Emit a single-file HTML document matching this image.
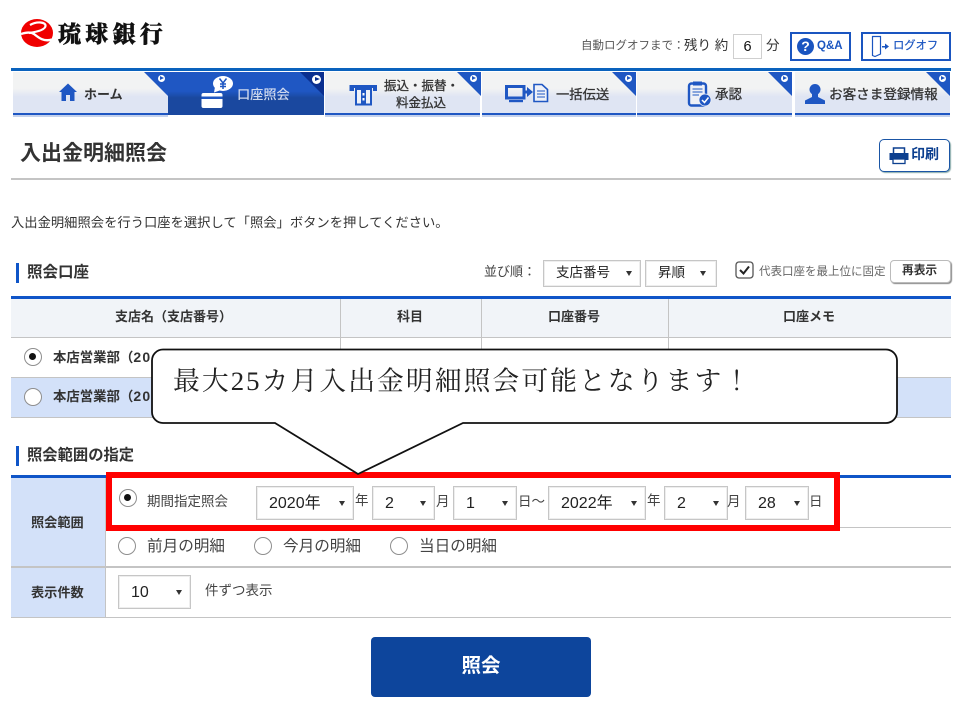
<!DOCTYPE html>
<html lang="ja"><head><meta charset="utf-8"><title>入出金明細照会</title>
<style>
html,body{margin:0;padding:0;background:#fff}
#p{position:relative;width:960px;height:704px;overflow:hidden;background:#fff;font-family:"Liberation Sans","Noto Sans CJK JP",sans-serif;color:#333}
#p div,#p span.a,#p svg{position:absolute}
.t{position:absolute;white-space:nowrap;line-height:20px;height:20px}
.b{font-weight:700}
.tab{top:72px;height:41px;background:linear-gradient(#f2f3f3 0,#f2f3f3 40%,#dfe5f3 60%,#dfe5f3 100%);border-bottom:2px solid #1f57c3;box-shadow:0 2px 0 #c5d2ec}
.tri{top:72px;width:0;height:0;border-top:24px solid #1f57c3;border-left:24px solid transparent}
.dot{top:75px;width:7px;height:7px;border-radius:50%;background:#fff}
.dot:after{content:"";position:absolute;left:2px;top:1px;border-left:4px solid #1f57c3;border-top:2.5px solid transparent;border-bottom:2.5px solid transparent}
.sel{box-sizing:border-box;height:34px;border:1px solid #c6c6c6;background:#fff;font-size:16px;line-height:32px;color:#222;box-shadow:inset 0 0 0 1px #eee}
.sel span{position:absolute;left:12px;top:1px;white-space:nowrap}
.sel i{position:absolute;right:5px;top:14px;width:0;height:0;border-top:5px solid #333;border-left:3px solid transparent;border-right:3px solid transparent}
.r{box-sizing:border-box;width:18px;height:18px;border-radius:50%;border:1.5px solid #8e8e8e;background:#fff}
.r.on:after{content:"";position:absolute;left:4px;top:4px;width:7px;height:7px;border-radius:50%;background:#111}
.g{background:#c4c4c4}
.bar{left:16px;width:3px;height:20px;background:#0f55c8}
.n{-webkit-text-stroke:.3px #333;color:#333}
.d{letter-spacing:1.300px;font-size:14px}
</style></head><body><div id="p">

<!-- logo -->
<svg style="left:20px;top:18px" width="34" height="30" viewBox="0 0 34 30"><ellipse cx="17" cy="15" rx="16" ry="14" fill="#f00000"/><path d="M10 7 C17 3 26 4 25.500 8 C25 12 16 14 9 15" fill="none" stroke="#fff" stroke-width="2.200"/><path d="M1 16 C7 14 11 14 14 16 C19 20 24 24 32 21.500" fill="none" stroke="#fff" stroke-width="2.400"/></svg>
<span class="t b" style="left:58px;top:21px;font-size:23px;line-height:24px;height:24px;letter-spacing:4.300px;color:#111;font-family:'Noto Serif CJK SC','Liberation Serif',serif;font-weight:900;-webkit-text-stroke:.5px #111">琉球銀行</span>

<!-- header right -->
<span class="t" style="left:581px;top:36px;font-size:11.500px;color:#555">自動ログオフまで：</span>
<span class="t" style="left:684px;top:36px;font-size:13.500px;color:#333">残り 約</span>
<div style="left:733px;top:34px;width:29px;height:25px;box-sizing:border-box;border:1px solid #cfcfcf"></div>
<span class="t" style="left:733px;top:37px;width:29px;text-align:center;font-size:14.500px;color:#111">6</span>
<span class="t" style="left:766px;top:36px;font-size:13.500px;color:#333">分</span>
<div style="left:790px;top:32px;width:61px;height:29px;box-sizing:border-box;border:2px solid #1a55c0;background:#fff"></div>
<div style="left:797px;top:38px;width:17px;height:17px;border-radius:50%;background:#1a55c0;color:#fff;font-size:14px;font-weight:700;line-height:17px;text-align:center">?</div>
<span class="t b" style="left:817px;top:36px;font-size:11.500px;color:#1a55c0">Q&amp;A</span>
<div style="left:861px;top:32px;width:90px;height:29px;box-sizing:border-box;border:2px solid #1a55c0;background:#fff"></div>
<svg style="left:871px;top:35px" width="20" height="23" viewBox="0 0 20 23"><path d="M1.500 1.500H9.500V19L4 21.500L1.500 20.500Z" fill="none" stroke="#1a55c0" stroke-width="1.200"/><path d="M11 11H14V8.500L18 11.500L14 14.500V12.500H11Z" fill="#1a55c0"/></svg>
<span class="t" style="left:893px;top:36px;font-size:11.300px;color:#1a55c0;-webkit-text-stroke:.2px #1a55c0">ログオフ</span>

<!-- nav -->
<div style="left:11px;top:68px;width:940px;height:3px;background:#0a62bd"></div>
<div class="tab" style="left:13px;width:155px"></div>
<div style="left:168px;top:72px;width:156px;height:43px;background:linear-gradient(#1f57c3 0,#1f57c3 45%,#1a489f 60%,#1a489f 100%)"></div>
<div class="tab" style="left:325px;width:155px"></div>
<div class="tab" style="left:482px;width:154px"></div>
<div class="tab" style="left:637px;width:155px"></div>
<div class="tab" style="left:795px;width:155px"></div>
<div class="tri" style="left:144px"></div><div class="dot" style="left:158px"></div>
<div class="tri" style="left:300px;border-top-color:#0a2f8f"></div><div style="left:312px;top:75px;width:9px;height:9px;border-radius:50%;background:#fff"></div><div style="left:315px;top:77px;border-left:5px solid #0a2f8f;border-top:2.500px solid transparent;border-bottom:2.500px solid transparent"></div>
<div class="tri" style="left:457px"></div><div class="dot" style="left:470px"></div>
<div class="tri" style="left:612px"></div><div class="dot" style="left:625px"></div>
<div class="tri" style="left:768px"></div><div class="dot" style="left:781px"></div>
<div class="tri" style="left:926px"></div><div class="dot" style="left:939px"></div>

<svg style="left:59px;top:83px" width="18" height="18" viewBox="0 0 18 18"><path d="M9 0.500L18 9H15.500V18H11V12H7V18H2.500V9H0Z" fill="#1f57c3"/></svg>
<span class="t b" style="left:84px;top:85px;font-size:13px;color:#333">ホーム</span>

<svg style="left:200px;top:76px" width="36" height="33" viewBox="0 0 36 33"><ellipse cx="23" cy="7.500" rx="10" ry="7.500" fill="#fff"/><path d="M15 11L14 16.500L21 14Z" fill="#fff"/><path d="M19.500 2.500L23 7L26.500 2.500M23 7V13M20 8H26M20 10.500H26" stroke="#1f57c3" stroke-width="1.500" fill="none"/><rect x="1.500" y="17" width="21" height="15" rx="2" fill="#fff"/><rect x="1.500" y="20.500" width="21" height="2.500" fill="#1f57c3"/></svg>
<span class="t b" style="left:237px;top:85px;font-size:13.200px;color:#cfd9ee;font-weight:500">口座照会</span>

<svg style="left:349px;top:84px" width="29" height="22" viewBox="0 0 29 22"><path d="M0.500 1H28V7H24V4H5V7H0.500Z" fill="#1f57c3"/><rect x="7" y="5" width="15" height="15.500" fill="#eef1f8" stroke="#1f57c3" stroke-width="2"/><rect x="12" y="6" width="5" height="14" fill="#1f57c3"/><rect x="13.500" y="9" width="2" height="2.500" fill="#fff"/><rect x="13.500" y="14" width="2" height="2.500" fill="#fff"/></svg>
<span class="t n" style="left:384px;top:76px;font-size:12.500px">振込・振替・</span>
<span class="t n" style="left:396px;top:93px;font-size:12.500px">料金払込</span>

<svg style="left:505px;top:83px" width="45" height="20" viewBox="0 0 45 20"><rect x="1.500" y="3.500" width="17.500" height="11.500" fill="none" stroke="#1f57c3" stroke-width="3"/><rect x="4" y="17" width="14" height="2.200" fill="#1f57c3"/><path d="M20 7.500H22V4L28 9L22 14V10.500H20Z" fill="#1f57c3"/><path d="M29 1.500H37L42.500 6.500V18.500H29Z" fill="#eef1f8" stroke="#1f57c3" stroke-width="1.600"/><path d="M32 8H40M32 11H40M32 14H40" stroke="#1f57c3" stroke-width="1"/></svg>
<span class="t n" style="left:556px;top:85px;font-size:13.300px">一括伝送</span>

<svg style="left:687px;top:80px" width="26" height="27" viewBox="0 0 26 27"><rect x="2" y="3.500" width="17" height="22" rx="2.500" fill="#eef0f6" stroke="#1f57c3" stroke-width="2.400"/><rect x="6" y="1.500" width="9" height="4" fill="#1f57c3"/><path d="M5.500 9H15.500M5.500 12H15.500M5.500 15H12" stroke="#1f57c3" stroke-width="1"/><circle cx="18" cy="20" r="6" fill="#1f57c3" stroke="#eef0f6" stroke-width=".8"/><path d="M15 20L17.500 22.500L21.500 17.500" stroke="#fff" stroke-width="1.500" fill="none"/></svg>
<span class="t n" style="left:715px;top:85px;font-size:13.500px">承認</span>

<svg style="left:804px;top:83px" width="22" height="22" viewBox="0 0 22 22"><circle cx="11" cy="6.500" r="5.500" fill="#1f57c3"/><path d="M8 11H14V14L21 17.500V21H1V17.500L8 14Z" fill="#1f57c3"/></svg>
<span class="t n" style="left:829px;top:85px;font-size:13.600px">お客さま登録情報</span>

<!-- title -->
<span class="t b" style="left:20px;top:143px;font-size:21px;line-height:22px;height:22px;color:#333">入出金明細照会</span>
<div style="left:879px;top:139px;width:71px;height:33px;box-sizing:border-box;border:1.500px solid #1a55a5;border-radius:5px;background:#fff;box-shadow:1px 1px 1px #8aa"></div>
<svg style="left:889px;top:147px" width="20" height="18" viewBox="0 0 20 18"><rect x="4.500" y="1" width="11" height="6" fill="#fff" stroke="#0c3f8f" stroke-width="1.500"/><rect x="0.500" y="6" width="19" height="7" fill="#0c3f8f"/><rect x="4" y="12" width="12" height="4.500" fill="#fff" stroke="#0c3f8f" stroke-width="1.300"/></svg>
<span class="t b" style="left:911px;top:144px;font-size:14px;color:#0c3f8f">印刷</span>
<div class="g" style="left:11px;top:178px;width:940px;height:2px"></div>

<span class="t" style="left:11px;top:213px;font-size:13.300px;color:#333">入出金明細照会を行う口座を選択して「照会」ボタンを押してください。</span>

<!-- section 1 -->
<div class="bar" style="top:263px"></div>
<span class="t b" style="left:27px;top:263px;font-size:15.500px;color:#333">照会口座</span>
<span class="t" style="left:484px;top:262px;font-size:13px;color:#444">並び順：</span>
<div class="sel" style="left:543px;top:260px;width:98px;height:27px;line-height:25px;font-size:13.500px"><span style="top:-1px">支店番号</span><i style="top:10px;right:8px"></i></div>
<div class="sel" style="left:645px;top:260px;width:72px;height:27px;line-height:25px;font-size:13.500px"><span style="top:-1px">昇順</span><i style="top:10px;right:10px"></i></div>
<svg style="left:735px;top:261px" width="19" height="18" viewBox="0 0 19 18"><rect x="1" y="1" width="17" height="16" rx="3" fill="#fff" stroke="#555" stroke-width="1.300"/><path d="M5 9L8.500 12.500L14 5.500" fill="none" stroke="#222" stroke-width="2"/></svg>
<span class="t" style="left:759px;top:262px;font-size:11.500px;color:#666">代表口座を最上位に固定</span>
<div style="left:890px;top:260px;width:61px;height:23px;box-sizing:border-box;border:1px solid #bbb;border-radius:4px;background:#fff;box-shadow:1px 1px 1px #888"></div>
<span class="t b" style="left:902px;top:261px;font-size:11.700px;color:#333">再表示</span>

<div style="left:11px;top:299px;width:940px;height:38px;background:#f1f4f8"></div>
<div style="left:11px;top:296px;width:940px;height:3px;background:#0f55c8"></div>
<div class="g" style="left:11px;top:337px;width:940px;height:1px"></div>
<div style="left:11px;top:378px;width:940px;height:39px;background:#d3e1f9"></div>
<div class="g" style="left:11px;top:377px;width:940px;height:1px"></div>
<div class="g" style="left:11px;top:417px;width:940px;height:1px"></div>
<div class="g" style="left:340px;top:299px;width:1px;height:78px"></div>
<div class="g" style="left:481px;top:299px;width:1px;height:78px"></div>
<div class="g" style="left:668px;top:299px;width:1px;height:78px"></div>
<span class="t b" style="left:115px;top:307px;font-size:13px;color:#333">支店名（支店番号）</span>
<span class="t b" style="left:397px;top:307px;font-size:13px;color:#333">科目</span>
<span class="t b" style="left:548px;top:307px;font-size:13px;color:#333">口座番号</span>
<span class="t b" style="left:783px;top:307px;font-size:13px;color:#333">口座メモ</span>
<div class="r on" style="left:24px;top:348px"></div>
<div class="r" style="left:24px;top:388px"></div>
<span class="t b" style="left:53px;top:347px;font-size:13.400px;color:#333">本店営業部（<span class="d">20</span></span>
<span class="t b" style="left:53px;top:386px;font-size:13.400px;color:#333">本店営業部（<span class="d">20</span></span>

<!-- section 2 -->
<div class="bar" style="top:446px"></div>
<span class="t b" style="left:27px;top:446px;color:#333;font-size:15.300px">照会範囲の指定</span>
<div style="left:11px;top:478px;width:94px;height:139px;background:#d3e1f9"></div>
<div style="left:11px;top:475px;width:940px;height:3px;background:#0f55c8"></div>
<div class="g" style="left:105px;top:478px;width:1px;height:139px"></div>
<div class="g" style="left:106px;top:527px;width:845px;height:1px"></div>
<div class="g" style="left:11px;top:566px;width:940px;height:2px"></div>
<div class="g" style="left:11px;top:617px;width:940px;height:1px"></div>
<span class="t b" style="left:31px;top:513px;font-size:13.200px;color:#333">照会範囲</span>
<span class="t b" style="left:31px;top:583px;font-size:13.200px;color:#333">表示件数</span>

<div class="r on" style="left:119px;top:489px"></div>
<span class="t" style="left:147px;top:492px;font-size:13.500px;color:#444">期間指定照会</span>
<div class="sel" style="left:256px;top:486px;width:98px"><span>2020年</span><i style="right:8px"></i></div>
<span class="t" style="left:355px;top:491px;font-size:13.500px;color:#444">年</span>
<div class="sel" style="left:372px;top:486px;width:63px"><span>2</span><i style="right:8px"></i></div>
<span class="t" style="left:436px;top:492px;font-size:13.500px;color:#444">月</span>
<div class="sel" style="left:453px;top:486px;width:64px"><span>1</span><i style="right:8px"></i></div>
<span class="t" style="left:518px;top:492px;font-size:13.500px;color:#444">日～</span>
<div class="sel" style="left:548px;top:486px;width:98px"><span>2022年</span><i style="right:8px"></i></div>
<span class="t" style="left:647px;top:491px;font-size:13.500px;color:#444">年</span>
<div class="sel" style="left:664px;top:486px;width:64px"><span>2</span><i style="right:8px"></i></div>
<span class="t" style="left:727px;top:492px;font-size:13.500px;color:#444">月</span>
<div class="sel" style="left:745px;top:486px;width:64px"><span>28</span><i style="right:8px"></i></div>
<span class="t" style="left:809px;top:492px;font-size:13.500px;color:#444">日</span>

<div class="r" style="left:118px;top:537px"></div>
<span class="t" style="left:147px;top:537px;font-size:15.600px;color:#444">前月の明細</span>
<div class="r" style="left:254px;top:537px"></div>
<span class="t" style="left:283px;top:537px;font-size:15.600px;color:#444">今月の明細</span>
<div class="r" style="left:390px;top:537px"></div>
<span class="t" style="left:419px;top:537px;font-size:15.600px;color:#444">当日の明細</span>

<div class="sel" style="left:118px;top:575px;width:73px"><span>10</span><i style="right:8px"></i></div>
<span class="t" style="left:205px;top:581px;font-size:13.500px;color:#444">件ずつ表示</span>

<div style="left:371px;top:637px;width:220px;height:60px;background:#0d459c;border-radius:4px"></div>
<span class="t b" style="left:371px;top:656px;width:220px;text-align:center;font-size:19.500px;color:#fff">照会</span>

<!-- red box -->
<div style="left:106px;top:472px;width:734px;height:59px;box-sizing:border-box;border:6px solid #f00"></div>

<!-- callout -->
<svg style="left:150px;top:348px" width="750" height="130" viewBox="0 0 750 130"><path d="M13 1.500H736A11 11 0 0 1 747 12.500V64A11 11 0 0 1 736 75H313L208 126L125 75H13A11 11 0 0 1 2 64V12.500A11 11 0 0 1 13 1.500Z" fill="#fff" stroke="#111" stroke-width="1.800"/></svg>
<span class="t" style="left:173px;top:366px;height:30px;line-height:30px;font-size:26.800px;letter-spacing:2.060px;color:#222;font-family:'Liberation Serif','Noto Serif CJK SC',serif">最大25カ月入出金明細照会可能となります！</span>

</div></body></html>
